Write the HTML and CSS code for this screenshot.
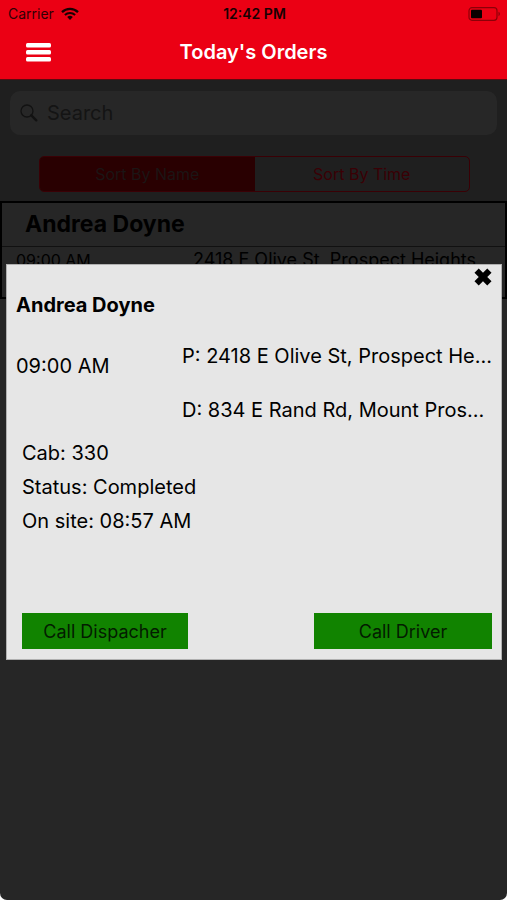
FILE: index.html
```html
<!DOCTYPE html>
<html lang="en">
<head>
<meta charset="utf-8">
<meta name="viewport" content="width=device-width, initial-scale=1">
<title>Today's Orders</title>
<link rel="stylesheet" href="styles.css">
</head>
<body>
<div class="app">
  <header class="header">
    <div class="status">
      <div class="carrier">
        <span>Carrier</span>
        <svg class="wifi" viewBox="0 0 18 13" aria-hidden="true">
          <path d="M1 5.2a11.5 11.5 0 0 1 16 0" fill="none" stroke="currentColor" stroke-width="2.3"/>
          <path d="M3.9 8.1a7.4 7.4 0 0 1 10.2 0" fill="none" stroke="currentColor" stroke-width="2.1"/>
          <path d="M6.2 10.1a4 4 0 0 1 5.6 0L9 12.9z" fill="currentColor"/>
        </svg>
      </div>
      <span class="clock">12:42 PM</span>
      <svg class="battery" viewBox="0 0 33 14" aria-hidden="true">
        <rect x="1" y="0.7" width="28" height="12.6" rx="3" fill="none" stroke="#8c0008" stroke-width="1.2"/>
        <rect x="3" y="2.8" width="11" height="8.4" rx="1" fill="#0a0000"/>
        <path d="M30.5 4.8a2.4 2.4 0 0 1 0 4.4z" fill="#8c0008"/>
      </svg>
    </div>
    <div class="navbar">
      <button class="menu" type="button" aria-label="Menu">
        <svg viewBox="0 0 25 19" aria-hidden="true">
          <rect width="25" height="4.6" rx="1.5"/>
          <rect y="7" width="25" height="4.6" rx="1.5"/>
          <rect y="14" width="25" height="4.6" rx="1.5"/>
        </svg>
      </button>
      <h1>Today's Orders</h1>
    </div>
  </header>

  <main class="main">
    <div class="tools">
      <label class="search">
        <svg viewBox="0 0 18 18" aria-hidden="true">
          <circle cx="7" cy="7" r="6" fill="none" stroke="currentColor" stroke-width="1.3"/>
          <path d="M11.3 11.3l5 5" stroke="currentColor" stroke-width="2.4" stroke-linecap="round"/>
        </svg>
        <input type="search" placeholder="Search" aria-label="Search">
      </label>
      <div class="segments">
        <button class="segment active" type="button">Sort By Name</button>
        <button class="segment" type="button">Sort By Time</button>
      </div>
    </div>
    <article class="order">
      <h2>Andrea Doyne</h2>
      <div class="order-row">
        <span>09:00 AM</span>
        <span>2418 E Olive St, Prospect Heights</span>
      </div>
    </article>

    <section class="dialog" role="dialog" aria-labelledby="dialog-name">
      <button class="close" type="button" aria-label="Close">
        <svg viewBox="0 0 20 20" aria-hidden="true">
          <path d="M3.6 3.6l12.8 12.8M16.4 3.6L3.6 16.4" stroke="#000" stroke-width="6"/>
        </svg>
      </button>
      <h2 id="dialog-name">Andrea Doyne</h2>
      <div class="trip">
        <span class="time">09:00 AM</span>
        <div class="places">
          <p>P: 2418 E Olive St, Prospect He...</p>
          <p>D: 834 E Rand Rd, Mount Pros...</p>
        </div>
      </div>
      <div class="details">
        <p>Cab: 330</p>
        <p>Status: Completed</p>
        <p>On site: 08:57 AM</p>
      </div>
      <div class="actions">
        <button type="button">Call Dispacher</button>
        <button type="button">Call Driver</button>
      </div>
    </section>
  </main>
</div>
</body>
</html>
```
FILE: styles.css
```css
* {
  box-sizing: border-box;
}

body {
  margin: 0;
  background: #fff;
  color: #000;
  font-family: Inter, "Liberation Sans", sans-serif;
}

h1, h2, p {
  margin: 0;
}

button {
  padding: 0;
  border: 0;
  background: none;
  color: inherit;
  font: inherit;
}

.app {
  display: flex;
  flex-direction: column;
  min-height: 100vh;
  overflow: hidden;
  border-radius: 0 0 7px 7px;
  background: #262626;
}

.header {
  background: #eb0014;
  border-bottom: 1px solid #5c0a10;
}

.status {
  display: grid;
  grid-template-columns: 1fr auto 1fr;
  align-items: center;
  height: 27px;
  padding: 0 6px 0 8px;
  font-size: 14px;
  color: #300004;
}

.carrier {
  display: flex;
  align-items: center;
  gap: 7px;
}

.wifi {
  width: 18px;
  height: 13px;
  color: #180002;
}

.clock {
  font-weight: 600;
  color: #180002;
}

.battery {
  justify-self: end;
  width: 33px;
  height: 14px;
}

.navbar {
  display: grid;
  grid-template-columns: 1fr auto 1fr;
  align-items: center;
  height: 52px;
  padding: 0 26px 2px;
  color: #fff;
}

.menu {
  justify-self: start;
  width: 25px;
  height: 19px;
}

.menu svg,
.close svg {
  display: block;
  width: 100%;
  height: 100%;
  fill: #fff;
}

h1 {
  font-size: 20px;
  font-weight: 600;
  line-height: 24px;
}

.main {
  position: relative;
  flex: 1;
}

.tools {
  padding: 11px 10px 9px;
  background: #1f1f1f;
}

.search {
  display: flex;
  align-items: center;
  gap: 9px;
  height: 44px;
  padding: 0 10px;
  border-radius: 10px;
  background: #272727;
  color: #121212;
}

.search svg {
  width: 18px;
  height: 18px;
}

.search input {
  flex: 1;
  min-width: 0;
  padding: 0;
  border: 0;
  outline: 0;
  background: none;
  color: inherit;
  font: 20px Inter, "Liberation Sans", sans-serif;
}

.search input::placeholder {
  color: #141414;
  opacity: 1;
}

.segments {
  display: flex;
  height: 36px;
  margin: 21px 27px 0 29px;
  overflow: hidden;
  border: 1px solid #3a0005;
  border-radius: 5px;
}

.segment {
  flex: 1;
  font-size: 16px;
  color: #3a0005;
}

.segment.active {
  background: #290001;
  color: #1c1515;
}

.order {
  height: 98px;
  border: 2px solid #000;
  background: #262626;
}

.order h2 {
  padding: 0 23px;
  border-bottom: 1px solid #111;
  font-size: 23px;
  font-weight: 700;
  line-height: 43px;
}

.order-row {
  display: grid;
  grid-template-columns: 177px 1fr;
  align-items: baseline;
  padding: 0 14px;
  line-height: 26px;
  font-size: 16px;
  white-space: nowrap;
}

.order-row span + span {
  font-size: 18px;
}

.dialog {
  position: absolute;
  top: 184px;
  left: 6px;
  right: 5px;
  display: flex;
  flex-direction: column;
  min-height: 396px;
  padding: 28px 9px 10px;
  border: 1px solid #b0b0b0;
  background: #e6e6e6;
}

.close {
  position: absolute;
  top: 2px;
  right: 8px;
  width: 20px;
  height: 20px;
}

.dialog h2 {
  font-size: 20px;
  font-weight: 700;
  line-height: 24px;
}

.trip {
  display: grid;
  grid-template-columns: 156px 1fr;
  gap: 10px;
  margin-top: 27px;
  font-size: 20px;
  line-height: 24px;
}

.time {
  padding-top: 10px;
}

.places {
  display: grid;
  gap: 30px;
  min-width: 0;
  white-space: nowrap;
}

.details {
  margin-top: 14px;
  padding-left: 6px;
  font-size: 20px;
  line-height: 34px;
}

.actions {
  display: flex;
  justify-content: space-between;
  gap: 126px;
  margin-top: auto;
  padding-left: 6px;
}

.actions button {
  flex: 1 1 178px;
  height: 36px;
  background: #118300;
  color: #031c00;
  font-size: 18px;
}

.actions button:first-child {
  flex-basis: 166px;
}
```
